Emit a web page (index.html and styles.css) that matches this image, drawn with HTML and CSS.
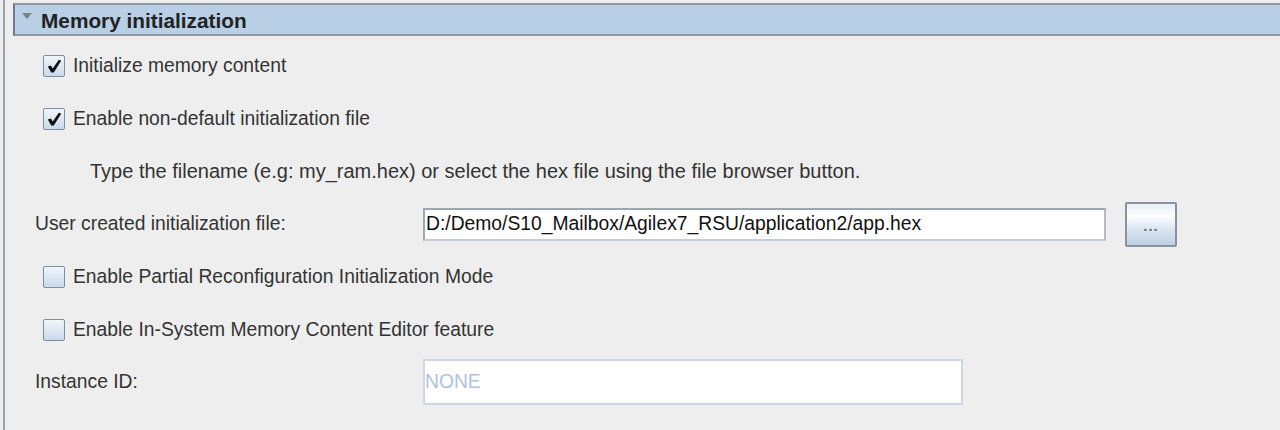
FILE: index.html
```html
<!DOCTYPE html>
<html>
<head>
<meta charset="utf-8">
<link rel="stylesheet" href="styles.css">
</head>
<body>
<div class="frame">
  <div class="panel">
    <div class="header">
      <span class="tri"></span>
      <span class="title">Memory initialization</span>
    </div>
    <div class="rows">
      <div class="row check-row">
        <span class="cb checked"><svg viewBox="0 0 16 16" width="16" height="16"><path d="M1.8 8.6 L4.8 7.4 L6.8 10.6 L12.8 1.8 L15.2 2.8 L7.8 14.6 L5.2 14.6 Z" fill="#111"/></svg></span>
        <span class="txt">Initialize memory content</span>
      </div>
      <div class="row check-row">
        <span class="cb checked"><svg viewBox="0 0 16 16" width="16" height="16"><path d="M1.8 8.6 L4.8 7.4 L6.8 10.6 L12.8 1.8 L15.2 2.8 L7.8 14.6 L5.2 14.6 Z" fill="#111"/></svg></span>
        <span class="txt">Enable non-default initialization file</span>
      </div>
      <div class="row hint-row">
        <span class="txt">Type the filename (e.g: my_ram.hex) or select the hex file using the file browser button.</span>
      </div>
      <div class="row field-row">
        <span class="label">User created initialization file:</span>
        <span class="field file">D:/Demo/S10_Mailbox/Agilex7_RSU/application2/app.hex</span>
        <span class="btn">...</span>
      </div>
      <div class="row check-row">
        <span class="cb"></span>
        <span class="txt">Enable Partial Reconfiguration Initialization Mode</span>
      </div>
      <div class="row check-row">
        <span class="cb"></span>
        <span class="txt">Enable In-System Memory Content Editor feature</span>
      </div>
      <div class="row field-row">
        <span class="label">Instance ID:</span>
        <span class="field disabled">NONE</span>
      </div>
    </div>
  </div>
</div>
</body>
</html>
```
FILE: styles.css
```css
html, body {
  margin: 0;
  padding: 0;
  background: #eeeeee;
  width: 1280px;
  height: 430px;
  overflow: hidden;
}
body {
  font-family: "Liberation Sans", Arial, sans-serif;
  color: #333333;
  font-size: 19.3px;
}
.frame {
  margin-left: 3px;
  border-left: 2px solid #9aa3ad;
  height: 430px;
  padding-top: 3px;
  padding-left: 8px;
  box-sizing: border-box;
}
.panel {
  display: flex;
  flex-direction: column;
}
.header {
  height: 29px;
  box-sizing: content-box;
  background: #b8cfe5;
  border-top: 2px solid #8d98a3;
  border-bottom: 2px solid #8d98a3;
  border-left: 2px solid #6f7a86;
  display: flex;
  align-items: center;
  padding-left: 7px;
  gap: 9px;
}
.tri {
  width: 0;
  height: 0;
  border-left: 5px solid transparent;
  border-right: 5px solid transparent;
  border-top: 6px solid #7a838c;
  margin-top: -8px;
}
.title {
  font-weight: bold;
  font-size: 20.8px;
  color: #222222;
  padding-top: 3px;
}
.rows {
  display: flex;
  flex-direction: column;
  padding-top: 4px;
}
.row {
  height: 52.7px;
  display: flex;
  align-items: center;
}
.check-row {
  padding-left: 30px;
  gap: 8px;
}
.cb {
  width: 20px;
  height: 20px;
  border: 1px solid #7f8d9c;
  border-radius: 2px;
  background: linear-gradient(#f2f6fb, #c9d9ec);
  display: flex;
  align-items: center;
  justify-content: center;
  box-sizing: content-box;
}
.hint-row {
  padding-left: 77px;
  font-size: 20px;
}
.field-row {
  padding-left: 22px;
}
.label {
  width: 388px;
  flex: none;
}
.field {
  box-sizing: border-box;
  background: #ffffff;
  display: flex;
  align-items: center;
  padding-left: 1px;
}
.field.file {
  width: 683px;
  height: 33px;
  border: 2px solid #9ea6ae;
  border-right-color: #b3bac1;
  border-bottom-color: #c6ccd2;
  color: #111111;
}
.btn {
  margin-left: 19px;
  width: 52px;
  height: 45px;
  box-sizing: border-box;
  border: 2px solid #8a939d;
  border-radius: 2px;
  background: linear-gradient(#e9eff6, #fdfeff 30%, #dbe6f2 60%, #bccfe3);
  display: flex;
  align-items: center;
  justify-content: center;
  color: #6a737d;
  font-size: 15px;
  font-weight: bold;
  letter-spacing: 1px;
  padding-top: 2px;
}
.field.disabled {
  width: 540px;
  height: 46px;
  border: 2px solid #cdd7e3;
  color: #aec3dc;
  padding-left: 0;
}
```
